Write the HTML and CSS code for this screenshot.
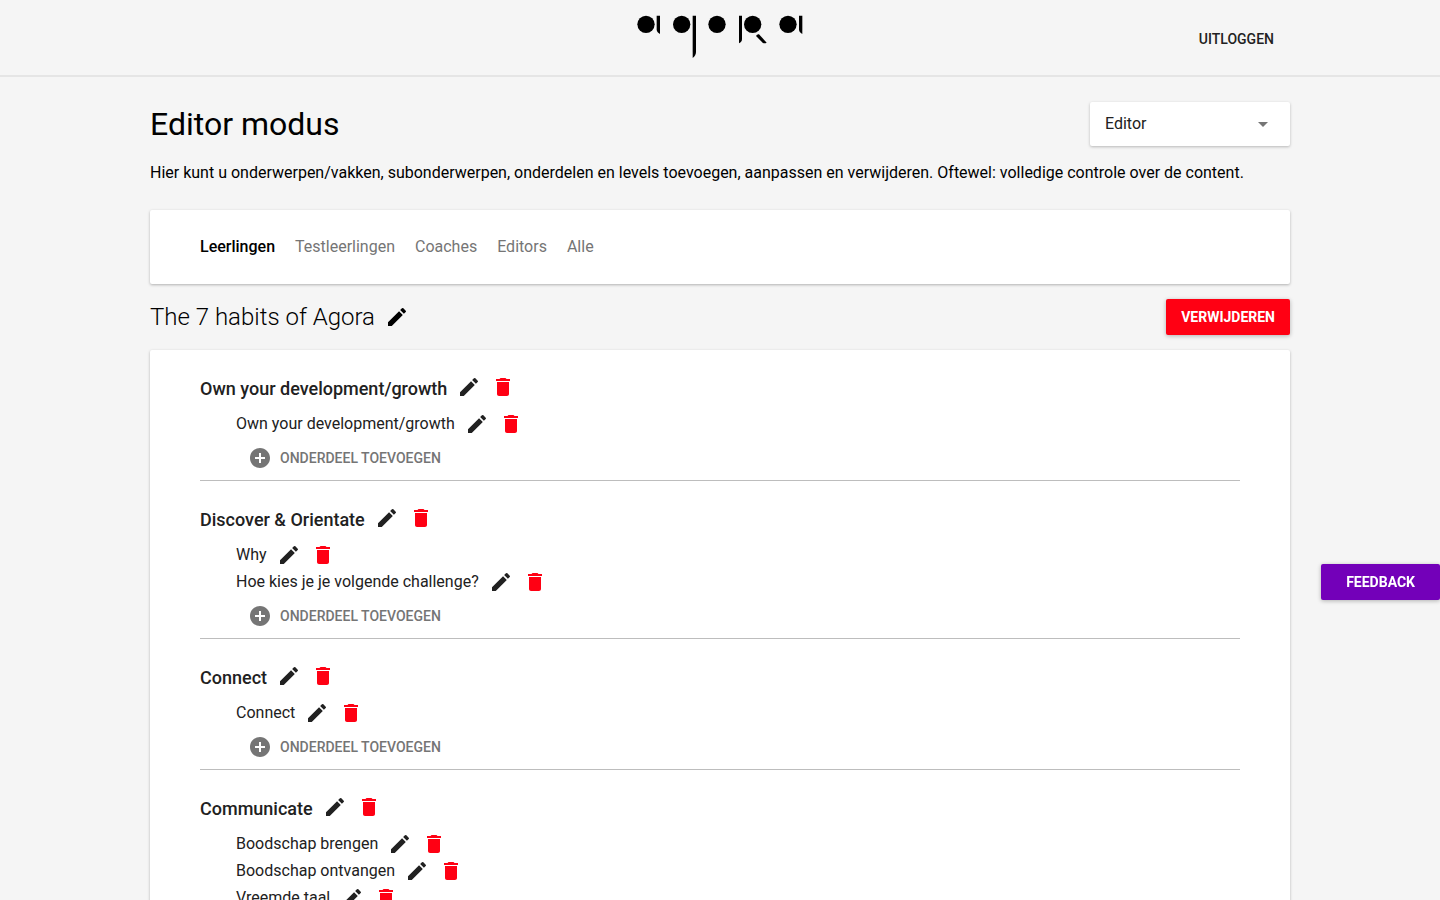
FILE: index.html
```html
<!DOCTYPE html>
<html lang="nl">
<head>
<meta charset="utf-8">
<meta name="viewport" content="width=device-width, initial-scale=1">
<title>Agora</title>
<link rel="stylesheet" href="styles.css">
</head>
<body>
<svg class="sprite" aria-hidden="true">
  <symbol id="edit" viewBox="0 0 24 24"><path d="M3 17.250V21h3.750L17.810 9.940l-3.750-3.750L3 17.250zM20.710 7.040a1 1 0 0 0 0-1.410l-2.340-2.340a1 1 0 0 0-1.410 0l-1.830 1.830 3.750 3.750 1.830-1.830z"/></symbol>
  <symbol id="trash" viewBox="0 0 24 24"><path d="M6 19c0 1.100.9 2 2 2h8c1.100 0 2-.9 2-2V7H6v12zM19 4h-3.500l-1-1h-5l-1 1H5v2h14V4z"/></symbol>
  <symbol id="add" viewBox="0 0 24 24"><path d="M12 2C6.480 2 2 6.480 2 12s4.480 10 10 10 10-4.480 10-10S17.520 2 12 2zm5 11h-4v4h-2v-4H7v-2h4V7h2v4h4v2z"/></symbol>
</svg>

<header class="topbar">
  <div class="topbar-inner">
    <a class="logo" href="#" aria-label="Agora">
      <svg viewBox="0 0 600 225" aria-hidden="true">
        <circle cx="78" cy="73" r="26"/><path d="M110 47h10v55q-10-5-10-14z"/>
        <circle cx="185" cy="73" r="26"/><path d="M218 47h10v108q0 11-10 19z"/>
        <circle cx="291" cy="73" r="26"/>
        <path d="M357 47h9v70q0 9-9 13z"/><circle cx="398" cy="73" r="26"/><path d="M408 108q3-6 9-5l23 25q-7 4-12 0z"/>
        <circle cx="504" cy="73" r="26"/><path d="M537 47h10v55q-10-5-10-14z"/>
      </svg>
    </a>
    <button class="logout" type="button">UITLOGGEN</button>
  </div>
</header>

<main class="page">
  <div class="page-head">
    <h1>Editor modus</h1>
    <div class="role">
      <select class="role-select" aria-label="Rol"><option>Editor</option></select>
      <svg class="role-arrow" viewBox="0 0 10 5" aria-hidden="true"><path d="M0 0h10L5 5z"/></svg>
    </div>
  </div>
  <p class="intro">Hier kunt u onderwerpen/vakken, subonderwerpen, onderdelen en levels toevoegen, aanpassen en verwijderen. Oftewel: volledige controle over de content.</p>

  <nav class="card tabs">
    <a class="tab active" href="#">Leerlingen</a>
    <a class="tab" href="#">Testleerlingen</a>
    <a class="tab" href="#">Coaches</a>
    <a class="tab" href="#">Editors</a>
    <a class="tab" href="#">Alle</a>
  </nav>

  <div class="subject">
    <h2>The 7 habits of Agora</h2>
    <button class="icon-btn" type="button" aria-label="Bewerken"><svg><use href="#edit"/></svg></button>
    <button class="btn btn-remove" type="button">VERWIJDEREN</button>
  </div>

  <div class="card topics">
    <section class="topic">
      <div class="topic-head"><h3>Own your development/growth</h3><button class="icon-btn" type="button" aria-label="Bewerken"><svg><use href="#edit"/></svg></button><button class="icon-btn danger" type="button" aria-label="Verwijderen"><svg><use href="#trash"/></svg></button></div>
      <ul class="parts">
        <li><span>Own your development/growth</span><button class="icon-btn" type="button" aria-label="Bewerken"><svg><use href="#edit"/></svg></button><button class="icon-btn danger" type="button" aria-label="Verwijderen"><svg><use href="#trash"/></svg></button></li>
      </ul>
      <button class="add" type="button"><svg><use href="#add"/></svg>ONDERDEEL TOEVOEGEN</button>
    </section>
    <section class="topic">
      <div class="topic-head"><h3>Discover &amp; Orientate</h3><button class="icon-btn" type="button" aria-label="Bewerken"><svg><use href="#edit"/></svg></button><button class="icon-btn danger" type="button" aria-label="Verwijderen"><svg><use href="#trash"/></svg></button></div>
      <ul class="parts">
        <li><span>Why</span><button class="icon-btn" type="button" aria-label="Bewerken"><svg><use href="#edit"/></svg></button><button class="icon-btn danger" type="button" aria-label="Verwijderen"><svg><use href="#trash"/></svg></button></li>
        <li><span>Hoe kies je je volgende challenge?</span><button class="icon-btn" type="button" aria-label="Bewerken"><svg><use href="#edit"/></svg></button><button class="icon-btn danger" type="button" aria-label="Verwijderen"><svg><use href="#trash"/></svg></button></li>
      </ul>
      <button class="add" type="button"><svg><use href="#add"/></svg>ONDERDEEL TOEVOEGEN</button>
    </section>
    <section class="topic">
      <div class="topic-head"><h3>Connect</h3><button class="icon-btn" type="button" aria-label="Bewerken"><svg><use href="#edit"/></svg></button><button class="icon-btn danger" type="button" aria-label="Verwijderen"><svg><use href="#trash"/></svg></button></div>
      <ul class="parts">
        <li><span>Connect</span><button class="icon-btn" type="button" aria-label="Bewerken"><svg><use href="#edit"/></svg></button><button class="icon-btn danger" type="button" aria-label="Verwijderen"><svg><use href="#trash"/></svg></button></li>
      </ul>
      <button class="add" type="button"><svg><use href="#add"/></svg>ONDERDEEL TOEVOEGEN</button>
    </section>
    <section class="topic">
      <div class="topic-head"><h3>Communicate</h3><button class="icon-btn" type="button" aria-label="Bewerken"><svg><use href="#edit"/></svg></button><button class="icon-btn danger" type="button" aria-label="Verwijderen"><svg><use href="#trash"/></svg></button></div>
      <ul class="parts">
        <li><span>Boodschap brengen</span><button class="icon-btn" type="button" aria-label="Bewerken"><svg><use href="#edit"/></svg></button><button class="icon-btn danger" type="button" aria-label="Verwijderen"><svg><use href="#trash"/></svg></button></li>
        <li><span>Boodschap ontvangen</span><button class="icon-btn" type="button" aria-label="Bewerken"><svg><use href="#edit"/></svg></button><button class="icon-btn danger" type="button" aria-label="Verwijderen"><svg><use href="#trash"/></svg></button></li>
        <li><span>Vreemde taal</span><button class="icon-btn" type="button" aria-label="Bewerken"><svg><use href="#edit"/></svg></button><button class="icon-btn danger" type="button" aria-label="Verwijderen"><svg><use href="#trash"/></svg></button></li>
      </ul>
    </section>
  </div>
</main>

<button class="btn btn-feedback" type="button">FEEDBACK</button>
</body>
</html>
```

FILE: styles.css
```css
* { box-sizing: border-box; }

body {
  margin: 0;
  background: #f5f5f5;
  color: #000;
  font: 400 16px/24px Roboto, sans-serif;
}

h1, h2, h3, p, ul { margin: 0; padding: 0; }
ul { list-style: none; }
button { font-family: inherit; border: 0; padding: 0; background: none; cursor: pointer; }
a { color: inherit; text-decoration: none; }
.sprite { display: none; }

.topbar { border-bottom: 2px solid #e5e5e5; }
.topbar-inner {
  display: grid;
  grid-template-columns: 1fr auto 1fr;
  max-width: 1140px;
  margin: 0 auto;
}
.logo { grid-column: 2; }
.logo svg { display: block; width: 200px; height: 75px; }
.logout {
  justify-self: end;
  align-self: center;
  padding: 12px 16px 9px;
  color: #212121;
  font-size: 14px;
  font-weight: 500;
}

.page { max-width: 1140px; margin: 0 auto; padding: 25px 0 40px; }
.page-head { display: flex; align-items: center; justify-content: space-between; }
h1 { font-size: 32px; line-height: 44px; font-weight: 400; }

.role { position: relative; width: 200px; }
.role-select {
  appearance: none;
  display: block;
  width: 100%;
  height: 44px;
  padding: 0 40px 0 15px;
  border: 0;
  border-radius: 2px;
  background: #fff;
  box-shadow: 0 1px 3px rgba(0, 0, 0, .25);
  color: #212121;
  font: inherit;
}
.role-arrow {
  position: absolute;
  right: 22px;
  top: 20px;
  width: 10px;
  height: 5px;
  fill: #757575;
  pointer-events: none;
}

.intro { margin: 15px 0 25px; }

.card {
  background: #fff;
  border-radius: 2px;
  box-shadow: 0 1px 3px rgba(0, 0, 0, .28);
}
.tabs { display: flex; gap: 20px; padding: 25px 50px; }
.tab { color: #757575; }
.tab.active { color: #000; font-weight: 500; }

.subject { display: flex; align-items: center; gap: 10px; margin: 15px 0; }
h2 { font-size: 24px; line-height: 36px; font-weight: 300; }

.btn {
  height: 36px;
  border-radius: 2px;
  box-shadow: 0 1px 4px rgba(0, 0, 0, .28);
  color: #fff;
  font-size: 14px;
  font-weight: 700;
}
.btn-remove { margin-left: auto; padding: 0 15px; background: #ff0013; }
.btn-feedback { position: fixed; right: 0; top: 564px; padding: 0 25px; background: #7300b9; }

.icon-btn { flex: none; width: 24px; height: 24px; }
.icon-btn svg { display: block; width: 24px; height: 24px; fill: currentColor; }
.icon-btn.danger { color: #ff0013; }

.topics { padding: 0 50px; color: #212121; }
.topics .icon-btn:not(.danger) { color: #212121; }
.topic { padding: 25px 0 4px; border-bottom: 1px solid #bdbdbd; }
.topic:last-child { border-bottom: 0; }
.topic-head { display: flex; align-items: center; gap: 10px; height: 24px; }
h3 { padding-top: 3px; font-size: 18px; line-height: 24px; font-weight: 500; }
.parts { margin-top: 11px; padding-left: 36px; }
.parts li { display: flex; align-items: center; gap: 10px; height: 27px; }

.add {
  display: flex;
  align-items: center;
  gap: 8px;
  height: 36px;
  margin: 3px 0 0 48px;
  color: #757575;
  font-size: 14px;
  font-weight: 500;
}
.add svg { width: 24px; height: 24px; fill: currentColor; }
```
